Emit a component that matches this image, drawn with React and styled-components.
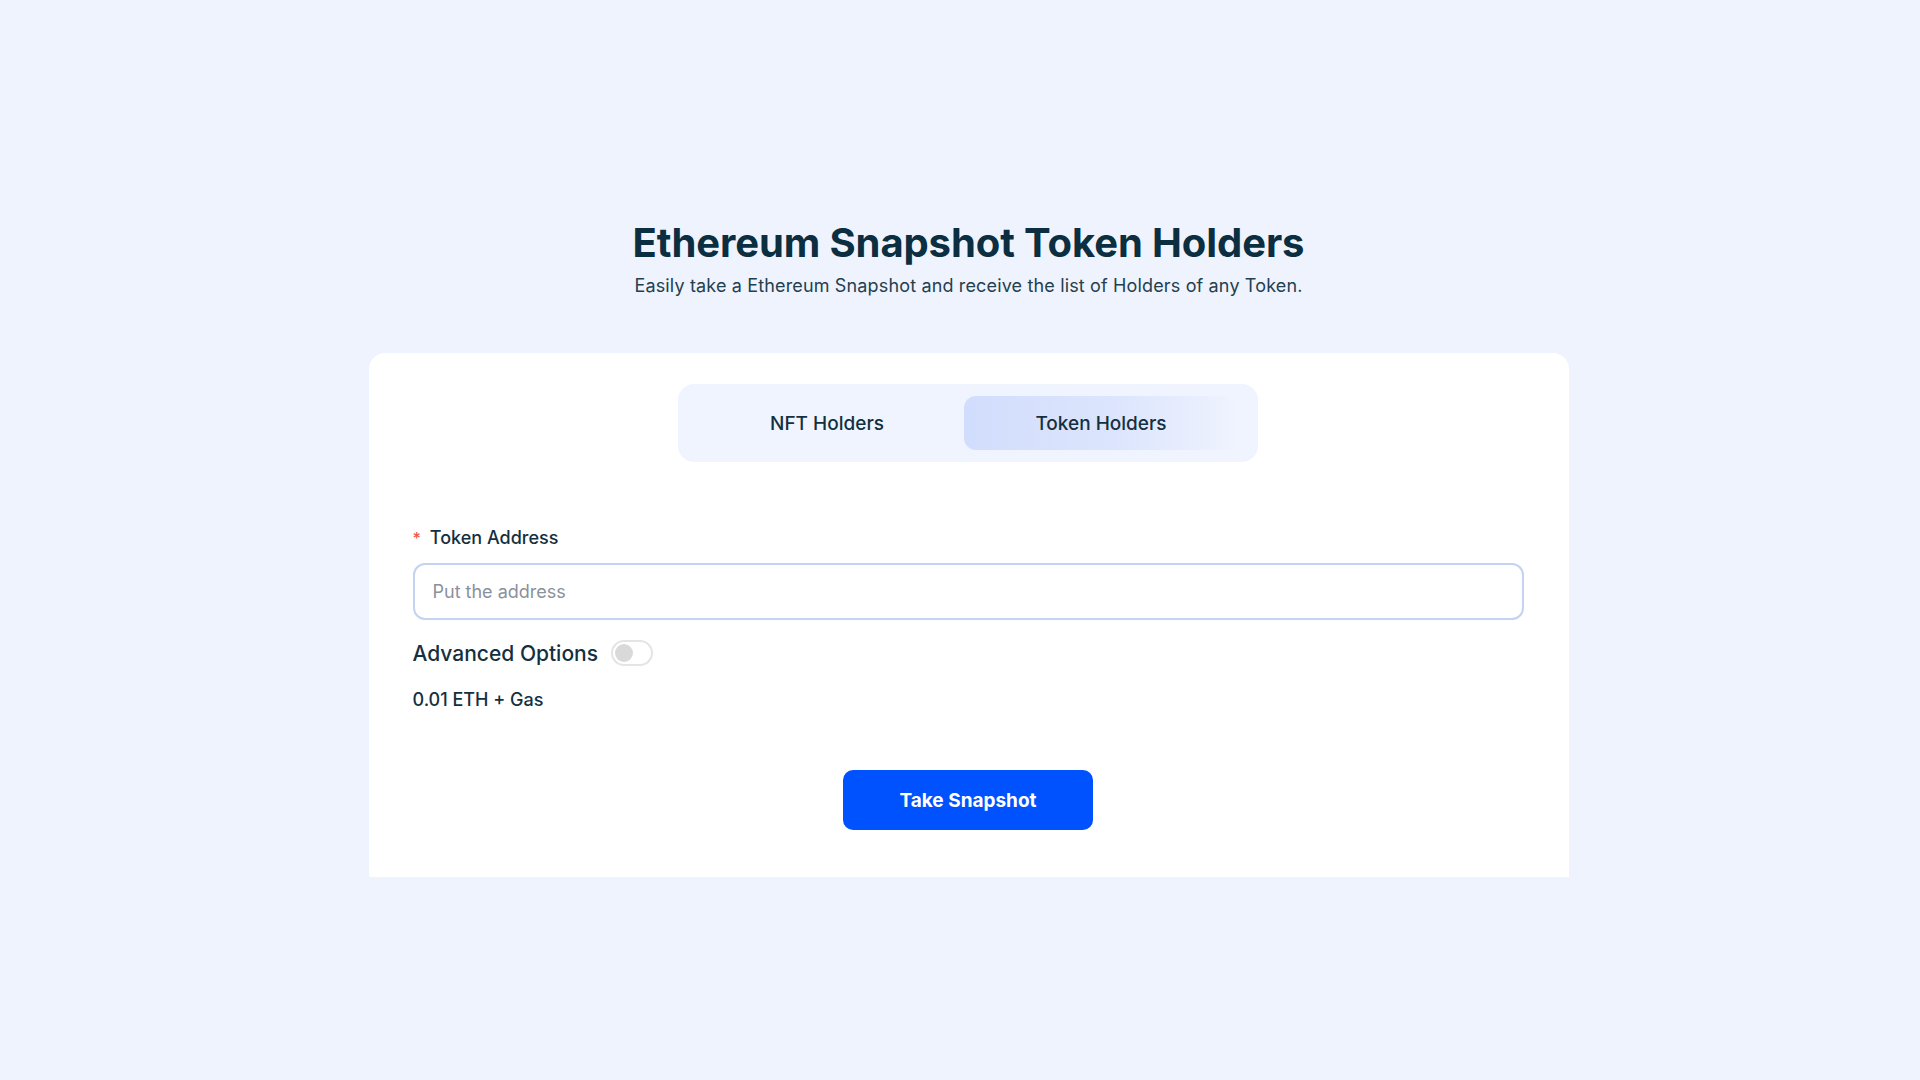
import React, { useState } from "react";
import styled, { createGlobalStyle } from "styled-components";

const GlobalStyle = createGlobalStyle`
  html, body {
    margin: 0;
    padding: 0;
    background: #eff3fe;
  }
  body {
    font-family: Inter, "Noto Sans", sans-serif;
    color: #0f2d3d;
  }
  * {
    box-sizing: border-box;
  }
`;

const Page = styled.main`
  min-height: 100vh;
  padding: 219px 0 0 17px;
  display: flex;
  flex-direction: column;
  align-items: center;
`;

const Title = styled.h1`
  margin: 0;
  font-size: 40px;
  line-height: 48px;
  font-weight: 700;
  color: #0b2e40;
  letter-spacing: -0.1px;
`;

const Subtitle = styled.p`
  margin: 6px 0 0;
  font-size: 18px;
  line-height: 26px;
  font-weight: 400;
  color: #23404f;
  letter-spacing: 0.15px;
`;

const Card = styled.section`
  width: 1200px;
  margin-top: 54px;
  padding: 31px 45px 47px 44px;
  background: #fff;
  border-radius: 16px 16px 0 0;
`;

const Tabs = styled.div`
  width: 580px;
  height: 78px;
  margin: 0 auto;
  padding: 12px 20px 12px 12px;
  display: flex;
  background: #f0f4fe;
  border-radius: 16px;
`;

const Tab = styled.button`
  flex: 1;
  border: 0;
  border-radius: 12px;
  font-family: inherit;
  font-size: 19px;
  font-weight: 500;
  color: #14303f;
  cursor: pointer;
  background: ${(p) =>
    p.$active
      ? "linear-gradient(90deg, #d1ddfc 0%, #dce5fd 55%, #eaeffe 88%, rgba(240,244,254,0) 100%)"
      : "transparent"};
`;

const Label = styled.label`
  display: flex;
  gap: 9px;
  margin-top: 64px;
  font-size: 18px;
  line-height: 24px;
  font-weight: 500;
  color: #14303f;
`;

const Required = styled.span`
  color: #f0554c;
  font-size: 16px;
`;

const Input = styled.input`
  display: block;
  width: 100%;
  height: 57px;
  margin-top: 13px;
  padding: 0 18px;
  border: 2px solid #c4d3f2;
  border-radius: 12px;
  font-family: inherit;
  font-size: 18px;
  color: #14303f;
  outline: none;
  &::placeholder {
    color: #8a919c;
  }
`;

const OptionsRow = styled.div`
  display: flex;
  align-items: center;
  gap: 13px;
  margin-top: 20px;
  height: 26px;
`;

const OptionsText = styled.span`
  font-size: 21px;
  font-weight: 500;
  color: #14303f;
`;

const Switch = styled.button`
  position: relative;
  width: 42px;
  height: 26px;
  padding: 0;
  border: 2px solid #e4e4e4;
  border-radius: 13px;
  background: ${(p) => (p.$on ? "#0052fe" : "#fff")};
  cursor: pointer;
`;

const Knob = styled.span`
  position: absolute;
  top: 2px;
  left: ${(p) => (p.$on ? "18px" : "2px")};
  width: 18px;
  height: 18px;
  border-radius: 50%;
  background: ${(p) => (p.$on ? "#fff" : "#d9d9d9")};
`;

const Price = styled.div`
  margin-top: 22px;
  font-size: 18px;
  line-height: 24px;
  font-weight: 500;
  color: #14303f;
`;

const Actions = styled.div`
  display: flex;
  justify-content: center;
  margin-top: 58px;
`;

const PrimaryButton = styled.button`
  width: 250px;
  height: 60px;
  border: 0;
  border-radius: 10px;
  background: #0052fe;
  color: #fff;
  font-family: inherit;
  font-size: 19px;
  font-weight: 700;
  cursor: pointer;
`;

const App = () => {
  const [tab, setTab] = useState("token");
  const [advanced, setAdvanced] = useState(false);

  return (
    <>
      <GlobalStyle />
      <Page>
        <Title>Ethereum Snapshot Token Holders</Title>
        <Subtitle>
          Easily take a Ethereum Snapshot and receive the list of Holders of any Token.
        </Subtitle>
        <Card>
          <Tabs>
            <Tab $active={tab === "nft"} onClick={() => setTab("nft")}>
              NFT Holders
            </Tab>
            <Tab $active={tab === "token"} onClick={() => setTab("token")}>
              Token Holders
            </Tab>
          </Tabs>

          <Label htmlFor="token-address">
            <Required>*</Required>
            Token Address
          </Label>
          <Input id="token-address" placeholder="Put the address" />

          <OptionsRow>
            <OptionsText>Advanced Options</OptionsText>
            <Switch $on={advanced} onClick={() => setAdvanced(!advanced)}>
              <Knob $on={advanced} />
            </Switch>
          </OptionsRow>

          <Price>0.01 ETH + Gas</Price>

          <Actions>
            <PrimaryButton>Take Snapshot</PrimaryButton>
          </Actions>
        </Card>
      </Page>
    </>
  );
};

export default App;
